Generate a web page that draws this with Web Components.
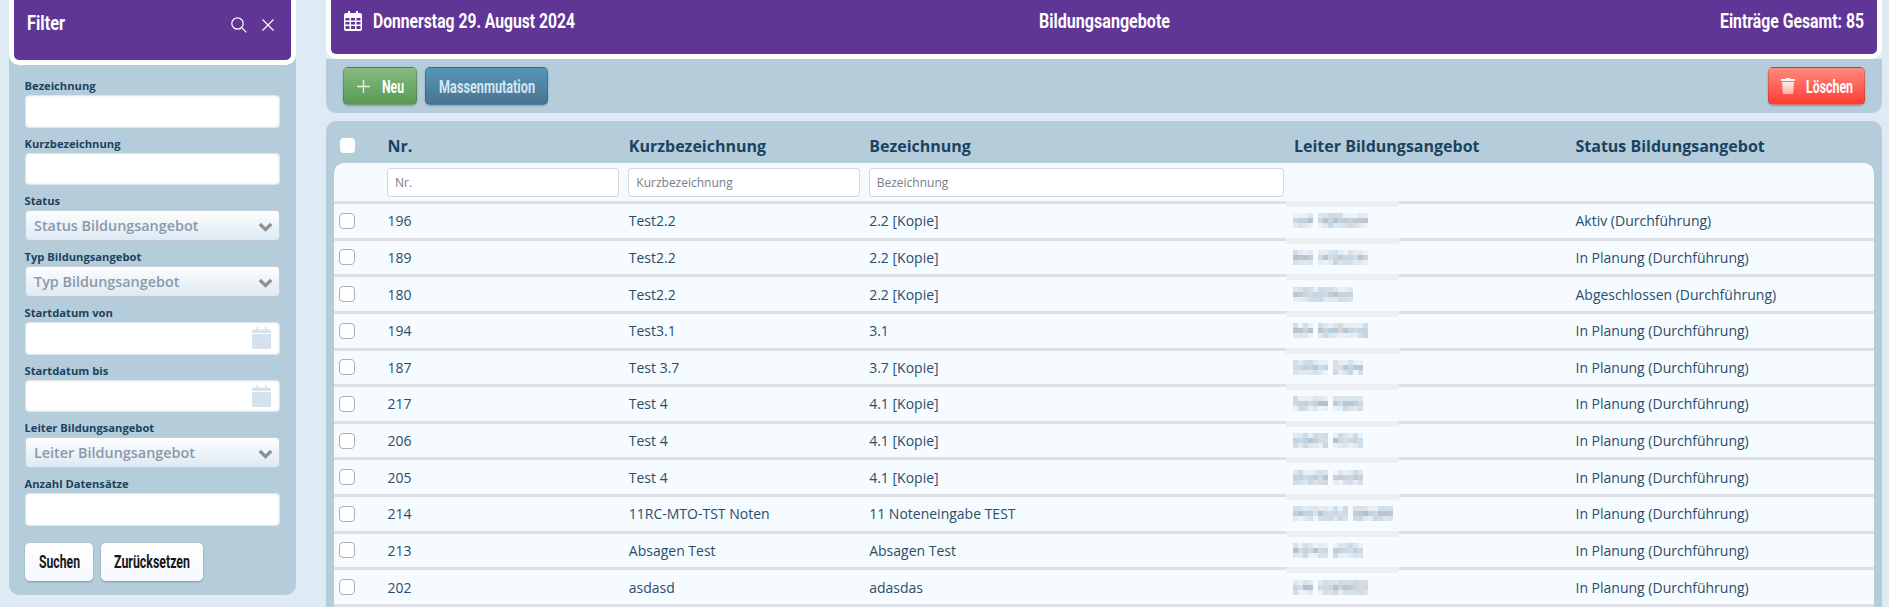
<!DOCTYPE html>
<html lang="de">
<head>
<meta charset="utf-8">
<title>Bildungsangebote</title>
<style>
  html, body { margin: 0; height: 607px; overflow: hidden; }
  body {
    background: #deebf5;
    font-family: "Open Sans", sans-serif;
    --head-font: Roboto, "Liberation Sans", sans-serif;
    --ink: #1a435f;
  }
  .page { display: flex; gap: 30px; padding: 0 7px 0 9px; align-items: flex-start; }
</style>
</head>
<body>
<div class="page">
  <filter-panel>
    <filter-field label="Bezeichnung"></filter-field>
    <filter-field label="Kurzbezeichnung"></filter-field>
    <filter-field label="Status" type="select" placeholder="Status Bildungsangebot"></filter-field>
    <filter-field label="Typ Bildungsangebot" type="select" placeholder="Typ Bildungsangebot"></filter-field>
    <filter-field label="Startdatum von" type="date"></filter-field>
    <filter-field label="Startdatum bis" type="date"></filter-field>
    <filter-field label="Leiter Bildungsangebot" type="select" placeholder="Leiter Bildungsangebot"></filter-field>
    <filter-field label="Anzahl Datensätze"></filter-field>
  </filter-panel>
  <main-area></main-area>
</div>

<script>
// narrow heading text: no condensed font installed, so squeeze to the width given in w
class CondText extends HTMLElement {
    constructor() {
        super();
        this.attachShadow({ mode: "open" });
        this.shadowRoot.innerHTML = `
        <style>
          :host { display: inline-block; white-space: nowrap; }
          span { display: inline-block; transform-origin: 0 50%; }
        </style>
        <span><slot></slot></span>`;
    }

    connectedCallback() {
        const w = Number(this.getAttribute("w"));
        const span = this.shadowRoot.querySelector("span");
        const full = span.getBoundingClientRect().width;
        this.style.width = w + "px";
        span.style.transform = `scaleX(${full ? w / full : .8})`;
    }
}
customElements.define("cond-text", CondText);

class PurpleBar extends HTMLElement {
    constructor() {
        super();
        this.attachShadow({ mode: "open" });
        this.shadowRoot.innerHTML = `
        <style>
          :host {
            display: block;
            box-sizing: border-box;
            background: #5f3696;
            border: 5px solid #fff;
            border-top: 0;
            border-radius: 0 0 10px 10px;
            color: #fff;
          }
        </style>
        <slot></slot>`;
    }
}
customElements.define("purple-bar", PurpleBar);

class FilterField extends HTMLElement {
    constructor() {
        super();
        this.attachShadow({ mode: "open" });
    }

    connectedCallback() {
        const label = this.getAttribute("label");
        const type = this.getAttribute("type") || "text";
        const placeholder = this.getAttribute("placeholder") || "";
        let control = `<div class="box input"></div>`;
        if (type === "select") {
            control = `<div class="box select"><span>${placeholder}</span>
              <svg width="15" height="10" viewBox="0 0 15 10"><path d="M1.800 2 7.500 7.600 13.200 2" fill="none" stroke="#8b8f93" stroke-width="3.200"/></svg></div>`;
        } else if (type === "date") {
            control = `<div class="box input date">
              <svg width="19" height="22" viewBox="0 0 19 22"><path fill="#d5e1ec" d="M4.500 0h1.600v2.500h6.800V0h1.600v2.500H17a2 2 0 0 1 2 2V6H0V4.500a2 2 0 0 1 2-2h2.500zM0 7h19v13a2 2 0 0 1-2 2H2a2 2 0 0 1-2-2z"/></svg></div>`;
        }
        this.shadowRoot.innerHTML = `
        <style>
          :host { display: block; }
          .label {
            font: 700 11.200px/15px "Open Sans", sans-serif;
            color: var(--ink);
            height: 17px;
            margin-left: -.5px;
          }
          .box {
            box-sizing: border-box;
            border-radius: 4px;
            display: flex;
            align-items: center;
            justify-content: space-between;
          }
          .input {
            height: 32.500px;
            background: #fff;
            border: 1px solid #dfe6ec;
            box-shadow: inset 0 0 3px rgba(0,0,0,.08);
            padding-right: 8px;
          }
          .select {
            height: 31px;
            background: linear-gradient(#fdfeff, #dde9f3);
            border: 1px solid #c5ced6;
            padding: 0 6px 0 8px;
            font: 600 14.400px "Open Sans", sans-serif;
            color: #8b99a8;
          }
          .date { justify-content: flex-end; }
          .select svg { margin-top: 3px; }
        </style>
        <div class="label">${label}</div>
        ${control}`;
    }
}
customElements.define("filter-field", FilterField);

class FilterPanel extends HTMLElement {
    constructor() {
        super();
        this.attachShadow({ mode: "open" });
        this.shadowRoot.innerHTML = `
        <style>
          :host {
            display: block;
            flex: 0 0 287px;
            background: #b5cddb;
            border-radius: 0 0 10px 10px;
            height: 595px;
          }
          purple-bar { height: 65px; }
          .head {
            display: flex;
            align-items: center;
            height: 49px;
            padding: 0 17px 0 13px;
            font: 700 20px var(--head-font);
          }
          .head cond-text { margin: 0 auto 3px 0; }
          .head svg { margin-left: 15px; }
          .fields {
            display: flex;
            flex-direction: column;
            gap: 8px;
            padding: 13px 16px 0;
          }
          .buttons { display: flex; gap: 8px; padding: 17px 16px 0; }
          .buttons div {
            height: 38px;
            box-sizing: border-box;
            display: flex;
            align-items: center;
            justify-content: center;
            background: linear-gradient(#fff, #f5f9fd);
            border-radius: 5px;
            box-shadow: 0 1px 2px rgba(40,70,90,.4);
            font: 700 18px var(--head-font);
            color: #14171a;
          }
        </style>
        <purple-bar>
          <div class="head">
            <cond-text w="38">Filter</cond-text>
            <svg width="16" height="16" viewBox="0 0 16 16" fill="none" stroke="#fff" stroke-width="1.200"><circle cx="6.500" cy="6.500" r="5.700"/><path d="M10.600 10.600l4.800 4.800"/></svg>
            <svg width="12" height="12" viewBox="0 0 12 12" fill="none" stroke="#fff" stroke-width="1.200"><path d="M.5.5l11 11M11.500.5l-11 11"/></svg>
          </div>
        </purple-bar>
        <div class="fields"><slot></slot></div>
        <div class="buttons">
          <div style="width:68px"><cond-text w="41">Suchen</cond-text></div>
          <div style="width:102px"><cond-text w="76">Zurücksetzen</cond-text></div>
        </div>`;
    }
}
customElements.define("filter-panel", FilterPanel);

class ActionButton extends HTMLElement {
    constructor() {
        super();
        this.attachShadow({ mode: "open" });
        this.shadowRoot.innerHTML = `
        <style>
          :host {
            display: flex;
            align-items: center;
            justify-content: center;
            height: 38px;
            box-sizing: border-box;
            border-radius: 5px;
            border: 1px solid rgba(0,0,0,.15);
            box-shadow: 0 1px 2px rgba(40,70,90,.35);
            color: #fff;
            font: 700 18px var(--head-font);
          }
          :host([kind="new"]) { width: 74px; gap: 12px; background: linear-gradient(#8abb80, #569a55); }
          :host([kind="mass"]) { width: 123px; background: linear-gradient(#5496b8, #4a7390); color: #d5e5ef; }
          :host([kind="delete"]) { width: 97px; gap: 11px; background: linear-gradient(#ff8a80, #ff3d33); }
        </style>
        <slot></slot>`;
    }
}
customElements.define("action-button", ActionButton);

class BlurName extends HTMLElement {
    constructor() {
        super();
        this.attachShadow({ mode: "open" });
    }

    connectedCallback() {
        // words = column counts, one column is about 5px
        const words = this.getAttribute("words").split(",").map(Number);
        let seed = Number(this.getAttribute("seed")) || 7;
        const rnd = () => {
            seed = (seed * 9301 + 49297) % 233280;
            return seed / 233280;
        };
        let rects = "";
        let col = 0;
        words.forEach((count) => {
            for (let c = 0; c < count; c++) {
                for (let r = 0; r < 3; r++) {
                    const strong = r === 1 ? .22 : 0;
                    const op = (.08 + rnd() * .3 + strong).toFixed(2);
                    const fill = rnd() > .75 ? "#86b0cc" : "#8a97a5";
                    rects += `<rect x="${col * 5}" y="${r * 5}" width="5" height="5" fill="${fill}" opacity="${op}"/>`;
                }
                col++;
            }
            col++;
        });
        this.shadowRoot.innerHTML = `
        <style>
          :host { display: block; height: 15px; line-height: 0; }
        </style>
        <svg width="${col * 5}" height="15">${rects}</svg>`;
    }
}
customElements.define("blur-name", BlurName);

class TableRow extends HTMLElement {
    constructor() {
        super();
        this.attachShadow({ mode: "open" });
    }

    connectedCallback() {
        const nr = this.getAttribute("nr");
        const short = this.getAttribute("short");
        const name = this.getAttribute("name");
        const words = this.getAttribute("words");
        const status = this.getAttribute("status");
        this.shadowRoot.innerHTML = `
        <style>
          :host {
            display: grid;
            grid-template-columns: 53px 241.300px 240.400px 424.800px 281.500px 1fr;
            align-items: center;
            box-sizing: border-box;
            height: 36.640px;
            border-bottom: 3px solid #dde1e6;
            position: relative;
            font: 400 14px "Open Sans", sans-serif;
            color: #2a4d68;
          }
          .check {
            box-sizing: border-box;
            width: 16px;
            height: 16px;
            margin-left: 5px;
            background: #fff;
            border: 1px solid #a9b2bb;
            border-radius: 4px;
          }
          .text { padding-left: .5px; white-space: nowrap; }
          .smear {
            position: absolute;
            left: 952px;
            top: -3px;
            width: 113px;
            height: 6px;
            background: #edf0f3;
          }
        </style>
        <div class="check"></div>
        <div class="text">${nr}</div>
        <div class="text">${short}</div>
        <div class="text">${name}</div>
        <blur-name words="${words}" seed="${nr}"></blur-name>
        <div class="text">${status}</div>
        <div class="smear"></div>`;
    }
}
customElements.define("table-row", TableRow);

class DataTable extends HTMLElement {
    constructor() {
        super();
        this.attachShadow({ mode: "open" });
        this.shadowRoot.innerHTML = `
        <style>
          :host {
            display: block;
            background: #b5cddb;
            border-radius: 10px 10px 0 0;
            padding: 0 8px;
            margin-top: 8px;
          }
          .cols {
            display: grid;
            grid-template-columns: 53px 241.300px 240.400px 424.800px 281.500px 1fr;
            align-items: center;
          }
          .head {
            height: 42px;
            padding-top: 7px;
            box-sizing: border-box;
            font: 700 16px "Open Sans", sans-serif;
            color: var(--ink);
          }
          .head div { padding-left: .5px; white-space: nowrap; }
          .head .check {
            box-sizing: border-box;
            width: 15px;
            height: 15px;
            margin-left: 6px;
            padding: 0;
            background: #fff;
            border-radius: 4px;
          }
          .body {
            background: #f6fbff;
            border-radius: 10px 10px 0 0;
          }
          .filters {
            height: 41px;
            box-sizing: border-box;
            border-bottom: 3px solid #dde1e6;
          }
          .filters .input {
            box-sizing: border-box;
            height: 29px;
            margin-right: 9px;
            padding-left: 7px;
            display: flex;
            align-items: center;
            background: #fff;
            border: 1px solid #d5d9dd;
            border-radius: 3px;
            font: 400 12px "Open Sans", sans-serif;
            color: #75808a;
          }
        </style>
        <div class="cols head">
          <div class="check"></div>
          <div>Nr.</div>
          <div>Kurzbezeichnung</div>
          <div>Bezeichnung</div>
          <div>Leiter Bildungsangebot</div>
          <div>Status Bildungsangebot</div>
        </div>
        <div class="body">
          <div class="cols filters">
            <div></div>
            <div class="input">Nr.</div>
            <div class="input">Kurzbezeichnung</div>
            <div class="input">Bezeichnung</div>
          </div>
          <slot></slot>
        </div>`;
    }
}
customElements.define("data-table", DataTable);

const PLAN = "In Planung (Durchführung)";
const ROWS = [
    ["196", "Test2.2", "2.2 [Kopie]", "4,10", "Aktiv (Durchführung)"],
    ["189", "Test2.2", "2.2 [Kopie]", "4,10", PLAN],
    ["180", "Test2.2", "2.2 [Kopie]", "12", "Abgeschlossen (Durchführung)"],
    ["194", "Test3.1", "3.1", "4,10", PLAN],
    ["187", "Test 3.7", "3.7 [Kopie]", "7,6", PLAN],
    ["217", "Test 4", "4.1 [Kopie]", "7,6", PLAN],
    ["206", "Test 4", "4.1 [Kopie]", "7,6", PLAN],
    ["205", "Test 4", "4.1 [Kopie]", "7,6", PLAN],
    ["214", "11RC-MTO-TST Noten", "11 Noteneingabe TEST", "11,8", PLAN],
    ["213", "Absagen Test", "Absagen Test", "7,6", PLAN],
    ["202", "asdasd", "adasdas", "4,10", PLAN],
];

class MainArea extends HTMLElement {
    constructor() {
        super();
        this.attachShadow({ mode: "open" });
        const rows = ROWS.map((r) => `<table-row nr="${r[0]}" short="${r[1]}" name="${r[2]}" words="${r[3]}" status="${r[4]}"></table-row>`).join("");
        this.shadowRoot.innerHTML = `
        <style>
          :host { display: block; flex: 1; min-width: 0; }
          purple-bar { height: 59px; }
          .title {
            display: grid;
            grid-template-columns: 1fr auto 1fr;
            align-items: center;
            height: 42px;
            padding: 0 13px;
            font: 700 20px var(--head-font);
          }
          .date { display: flex; align-items: center; gap: 11px; }
          .total { text-align: right; }
          .toolbar {
            display: flex;
            align-items: center;
            gap: 8px;
            height: 54px;
            box-sizing: border-box;
            padding: 0 17px;
            background: #b5cddb;
            border-radius: 0 0 10px 10px;
          }
          .spacer { flex: 1; }
        </style>
        <purple-bar>
          <div class="title">
            <div class="date">
              <svg width="18" height="20" viewBox="0 0 18 20"><path fill="#fff" fill-rule="evenodd" d="M4 0h2v2h6V0h2v2h2a2 2 0 0 1 2 2v14a2 2 0 0 1-2 2H2a2 2 0 0 1-2-2V4a2 2 0 0 1 2-2h2zM1.500 7v2.500h4V7zM7 7v2.500h4V7zM12.500 7v2.500h4V7zM1.500 11v2.500h4V11zM7 11v2.500h4V11zM12.500 11v2.500h4V11zM1.500 15v3h4v-3zM7 15v3h4v-3zM12.500 15v3h4v-3z"/></svg>
              <cond-text w="202">Donnerstag 29. August 2024</cond-text>
            </div>
            <cond-text w="131">Bildungsangebote</cond-text>
            <div class="total"><cond-text w="144">Einträge Gesamt: 85</cond-text></div>
          </div>
        </purple-bar>
        <div class="toolbar">
          <action-button kind="new">
            <svg width="13" height="13" viewBox="0 0 13 13"><path d="M6.500 0v13M0 6.500h13" stroke="#e6f2df" stroke-width="1.400"/></svg>
            <cond-text w="22">Neu</cond-text>
          </action-button>
          <action-button kind="mass"><cond-text w="96">Massenmutation</cond-text></action-button>
          <div class="spacer"></div>
          <action-button kind="delete">
            <svg width="14" height="16" viewBox="0 0 14 16"><defs><linearGradient id="t" x1="0" y1="0" x2="0" y2="1"><stop offset="0" stop-color="#fff"/><stop offset="1" stop-color="#ffb0a8"/></linearGradient></defs><path fill="url(#t)" d="M5 0h4l.5 1H14v2H0V1h4.500zM1 4h12l-.8 11a1 1 0 0 1-1 1H2.800a1 1 0 0 1-1-1z"/></svg>
            <cond-text w="47">Löschen</cond-text>
          </action-button>
        </div>
        <data-table>${rows}</data-table>`;
    }
}
customElements.define("main-area", MainArea);
</script>
</body>
</html>
